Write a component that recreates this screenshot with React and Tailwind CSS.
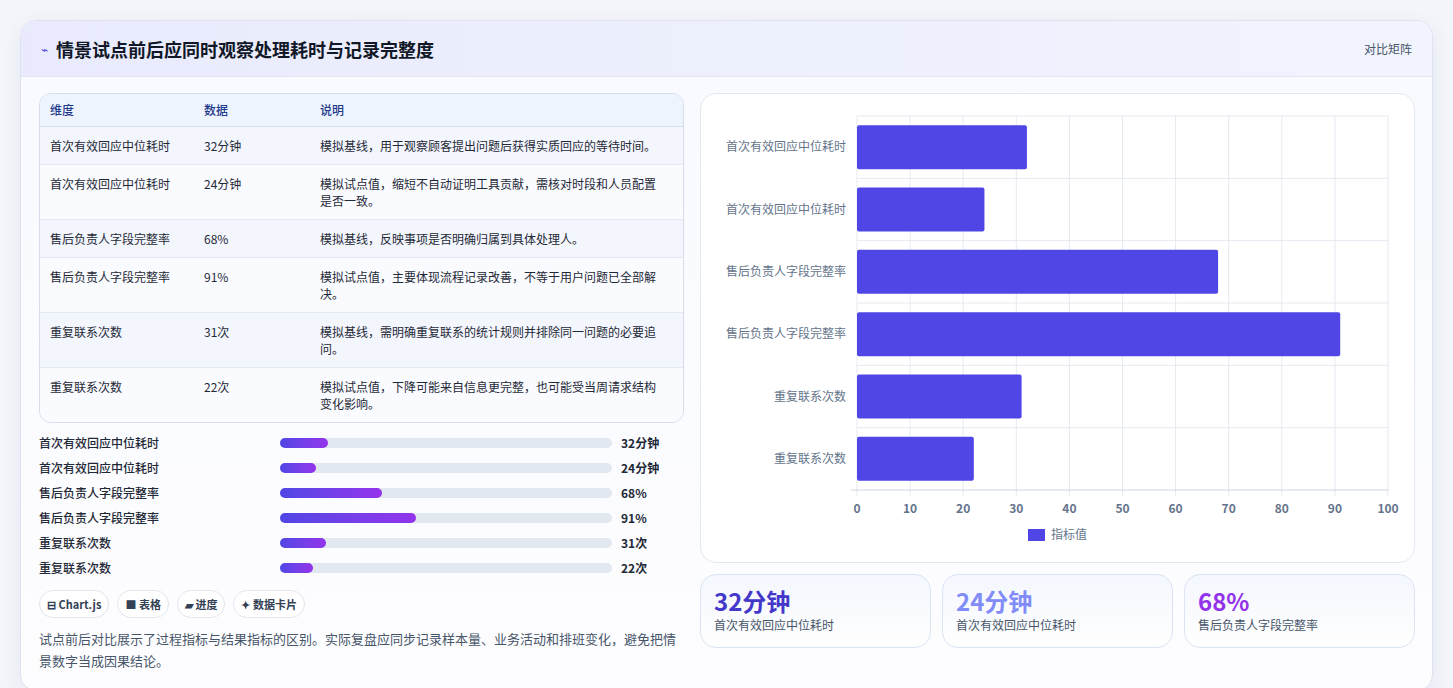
import React from "react";

const rows = [
  { name: "首次有效回应中位耗时", val: "32分钟", v: 32, note: "模拟基线，用于观察顾客提出问题后获得实质回应的等待时间。" },
  { name: "首次有效回应中位耗时", val: "24分钟", v: 24, note: "模拟试点值，缩短不自动证明工具贡献，需核对时段和人员配置是否一致。" },
  { name: "售后负责人字段完整率", val: "68%", v: 68, note: "模拟基线，反映事项是否明确归属到具体处理人。" },
  { name: "售后负责人字段完整率", val: "91%", v: 91, note: "模拟试点值，主要体现流程记录改善，不等于用户问题已全部解决。" },
  { name: "重复联系次数", val: "31次", v: 31, note: "模拟基线，需明确重复联系的统计规则并排除同一问题的必要追问。" },
  { name: "重复联系次数", val: "22次", v: 22, note: "模拟试点值，下降可能来自信息更完整，也可能受当周请求结构变化影响。" },
];

const font = { fontFamily: '"Noto Sans CJK SC", "Noto Sans", sans-serif' };

function Chart() {
  const x0 = 156, x1 = 687, y0 = 22, y1 = 396;
  const step = (y1 - y0) / 6;
  return (
    <svg width="713" height="470" viewBox="0 0 713 470">
      {[0, 10, 20, 30, 40, 50, 60, 70, 80, 90, 100].map((t) => {
        const x = x0 + ((x1 - x0) * t) / 100;
        return (
          <g key={t}>
            <line x1={x} y1={y0} x2={x} y2={y1 + 6} stroke="#e5e9f0" />
            <text x={x} y={419} textAnchor="middle" fontSize="12" fontWeight="600" fill="#64748b">{t}</text>
          </g>
        );
      })}
      {rows.map((r, i) => (
        <line key={"h" + i} x1={x0} x2={x1} y1={y0 + step * i} y2={y0 + step * i} stroke="#e5e9f0" />
      ))}
      <line x1={x0 - 6} x2={x1} y1={y1} y2={y1} stroke="#cbd5e1" />
      {rows.map((r, i) => {
        const cy = y0 + step * i + step / 2;
        return (
          <g key={i}>
            <rect x={x0} y={cy - 22} width={((x1 - x0) * r.v) / 100} height="44" rx="2" fill="#4f46e5" />
            <text x={145} y={cy + 4} textAnchor="end" fontSize="12" fill="#64748b">{r.name}</text>
          </g>
        );
      })}
      <rect x="327" y="435" width="17" height="12" fill="#4f46e5" />
      <text x="350" y="445" fontSize="12" fill="#64748b">指标值</text>
    </svg>
  );
}

export default function App() {
  return (
    <div className="min-h-screen bg-[#f3f5fa] p-5" style={font}>
      <div className="rounded-2xl border border-[#dde2f0] bg-gradient-to-b from-[#f8faff] to-[#fdfdff] shadow-[0_6px_20px_rgba(80,90,140,0.08)] overflow-hidden">
        <div className="h-14 flex items-center justify-between px-5 bg-gradient-to-r from-[#e9ebfd] to-[#f1f4fd] border-b border-[#e3e7f3]">
          <div className="flex items-center gap-2">
            <span className="text-[#4f46e5] text-xs">⌁</span>
            <h1 className="text-lg font-bold text-[#111827]">情景试点前后应同时观察处理耗时与记录完整度</h1>
          </div>
          <span className="text-xs text-[#475569]">对比矩阵</span>
        </div>
        <div className="flex gap-4 px-[18px] pt-4 pb-[18px]">
          <div className="w-[645px] shrink-0">
            <div className="rounded-xl border border-[#d5dcea] overflow-hidden bg-[#f7f9fe] text-xs">
              <div className="flex h-[33px] items-center bg-[#eef4fe] border-b border-[#d5dcea] text-[#1e3a8a] font-medium">
                <div className="w-[164px] pl-[10px]">维度</div>
                <div className="w-[116px]">数据</div>
                <div>说明</div>
              </div>
              {rows.map((r, i) => (
                <div key={i} className={`flex py-[10px] leading-[17px] text-[#1f2937] ${i ? "border-t border-[#e3e8f2]" : ""} ${i % 2 ? "bg-[#fafbff]" : "bg-[#f4f6fd]"}`}>
                  <div className="w-[164px] pl-[10px] shrink-0">{r.name}</div>
                  <div className="w-[116px] shrink-0">{r.val}</div>
                  <div className="pr-4">{r.note}</div>
                </div>
              ))}
            </div>
            <div className="mt-[11px] flex flex-col gap-[7px]">
              {rows.map((r, i) => (
                <div key={i} className="flex items-center h-[18px] text-xs font-medium text-[#1f2937]">
                  <div className="w-[241px]">{r.name}</div>
                  <div className="w-[332px] h-[10px] rounded-full bg-[#e2e8f0]">
                    <div className="h-full rounded-full bg-gradient-to-r from-[#4f46e5] to-[#9333ea]" style={{ width: `${(r.v * 45) / 100}%` }} />
                  </div>
                  <div className="ml-[9px] font-bold">{r.val}</div>
                </div>
              ))}
            </div>
            <div className="mt-[13px] flex gap-2 text-[11px] font-semibold text-[#334155]">
              {["⊟ Chart.js", "■ 表格", "▰ 进度", "✦ 数据卡片"].map((c) => (
                <span key={c} className="h-7 px-[7px] flex items-center rounded-full border border-[#e2e6ef] bg-white">{c}</span>
              ))}
            </div>
            <p className="mt-[10px] text-[13px] leading-[22px] text-[#475569]">
              试点前后对比展示了过程指标与结果指标的区别。实际复盘应同步记录样本量、业务活动和排班变化，避免把情景数字当成因果结论。
            </p>
          </div>
          <div className="flex-1 flex flex-col gap-[11px]">
            <div className="rounded-2xl border border-[#e2e8f0] bg-white h-[470px]">
              <Chart />
            </div>
            <div className="grid grid-cols-3 gap-[11px]">
              {[
                { v: "32分钟", c: "text-[#4338ca]", l: "首次有效回应中位耗时" },
                { v: "24分钟", c: "text-[#818cf8]", l: "首次有效回应中位耗时" },
                { v: "68%", c: "text-[#9333ea]", l: "售后负责人字段完整率" },
              ].map((s, i) => (
                <div key={i} className="h-[74px] rounded-2xl border border-[#dbe4f3] bg-gradient-to-b from-[#f4f7fe] to-white px-[13px] pt-[10px]">
                  <div className={`text-2xl font-bold leading-8 ${s.c}`}>{s.v}</div>
                  <div className="text-xs text-[#475569]">{s.l}</div>
                </div>
              ))}
            </div>
          </div>
        </div>
      </div>
    </div>
  );
}
